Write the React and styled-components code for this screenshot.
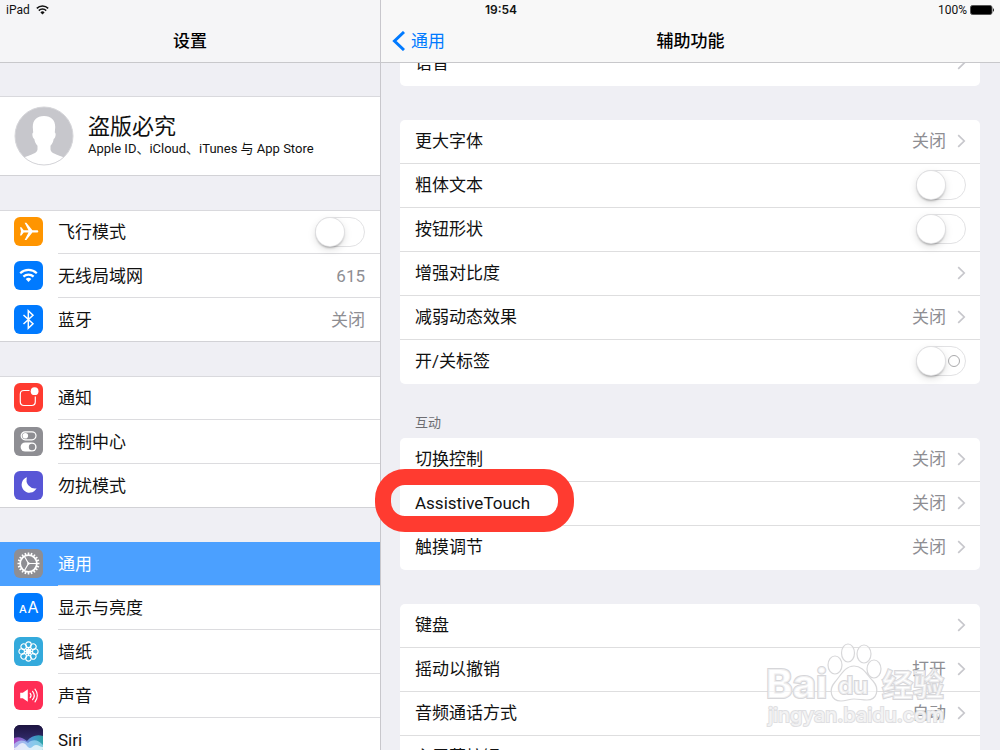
import React from "react";
import styled, { createGlobalStyle } from "styled-components";

const Global = createGlobalStyle`
  * { box-sizing: border-box; }
  html, body, #root { height: 100%; }
  body {
    margin: 0;
    background: #efeff4;
    color: #111;
    font-family: Roboto, "Noto Sans CJK SC", sans-serif;
    font-size: 17px;
    line-height: 24px;
    overflow: hidden;
  }
  button, input { font: inherit; color: inherit; margin: 0; }
  h1, h2, p, ul { margin: 0; padding: 0; }
  ul { list-style: none; }
`;

const Screen = styled.div`
  position: relative;
  display: flex;
  height: 100vh;
  overflow: hidden;
`;
const Sidebar = styled.nav`
  flex: 0 0 38%;
  display: flex;
  flex-direction: column;
  min-width: 0;
`;
const Detail = styled.main`
  flex: 1;
  display: flex;
  flex-direction: column;
  min-width: 0;
  border-left: 1px solid #c8c7cc;
`;
const Header = styled.header`
  flex: none;
  position: relative;
  z-index: 2;
  height: 63px;
  display: flex;
  flex-direction: column;
  background: ${(p) => (p.$light ? "#f8f8f8" : "#f5f5f7")};
  border-bottom: 1px solid #c8c8cb;
`;
const StatusBar = styled.div`
  height: 20px;
  display: flex;
  align-items: center;
  gap: 6px;
  padding: 0 6px;
  font-size: 12px;
  line-height: 20px;
`;
const StatusSide = styled.span`
  flex: 1;
  display: flex;
  justify-content: flex-end;
  align-items: center;
  gap: 3px;
`;
const Clock = styled.time`
  font-family: Inter, sans-serif;
  font-weight: 600;
  padding-left: 98px;
`;
const TitleBar = styled.div`
  flex: 1;
  display: grid;
  grid-template-columns: 1fr auto 1fr;
  align-items: center;
`;
const Title = styled.h1`
  grid-column: 2;
  font-size: 17px;
  line-height: 24px;
  font-weight: 500;
  color: #000;
`;
const Back = styled.button`
  justify-self: start;
  display: flex;
  align-items: center;
  gap: 6px;
  padding: 0 0 0 11px;
  border: 0;
  background: none;
  color: #007aff;
`;
const SideBody = styled.div`
  flex: 1;
  min-height: 0;
  overflow: hidden;
  display: flex;
  flex-direction: column;
  gap: 34px;
  padding-top: 33px;
`;
const Group = styled.ul`
  flex: none;
  background: #fff;
  box-shadow: inset 0 1px #d9d9dd, inset 0 -1px #d2d2d6;
`;
const SideItem = styled.li`
  height: 44px;
  display: flex;
  padding-left: 14px;
  background: ${(p) => (p.$on ? "#4ba0ff" : "transparent")};
  color: ${(p) => (p.$on ? "#fff" : "inherit")};
`;
const Badge = styled.span`
  flex: none;
  display: flex;
  width: 29px;
  height: 29px;
  margin: 7px 15px 0 0;
  border-radius: 6px;
  overflow: hidden;
  background: ${(p) => p.$bg};
  svg { width: 29px; height: 29px; }
`;
const SideMain = styled.div`
  flex: 1;
  display: flex;
  align-items: center;
  justify-content: space-between;
  padding-right: 15px;
  border-bottom: 1px solid ${(p) => (p.$last ? "transparent" : "#dcdcdf")};
`;
const Value = styled.span`
  color: #8e8e93;
`;
const Profile = styled.a`
  flex: none;
  display: flex;
  align-items: center;
  gap: 14px;
  height: 80px;
  padding-left: 14px;
  background: #fff;
  box-shadow: inset 0 1px #d9d9dd, inset 0 -1px #d2d2d6;
  color: inherit;
  text-decoration: none;
`;
const Name = styled.h2`
  font-size: 22px;
  line-height: 26px;
  font-weight: 400;
`;
const Sub = styled.p`
  font-size: 13px;
  line-height: 18px;
`;
const DetailBody = styled.div`
  flex: 1;
  min-height: 0;
  overflow-x: visible;
  overflow-y: clip;
  padding: 0 20px 0 19px;
`;
const Scrolled = styled.div`
  display: flex;
  flex-direction: column;
  gap: 34px;
  margin-top: -21px;
`;
const Card = styled.ul`
  background: #fff;
  border-radius: 5px;
  li + li { box-shadow: 0 -1px #dededf; }
`;
const Caption = styled.h2`
  font-size: 13px;
  line-height: 20px;
  font-weight: 400;
  color: #6d6d72;
  padding: 0 0 5px 15px;
  margin-top: -5px;
`;
const Row = styled.li`
  height: 44px;
  display: flex;
  padding-left: 15px;
`;
const RowMain = styled.div`
  flex: 1;
  display: flex;
  align-items: center;
  padding: 0 14px 2px 0;
  gap: 11px;
`;
const RowLabel = styled.label`
  flex: 1;
`;
const Switch = styled.input`
  appearance: none;
  flex: none;
  width: 50px;
  height: 30px;
  border-radius: 15px;
  border: 1px solid #e2e2e4;
  background: #fff;
  display: flex;
  align-items: center;
  justify-content: space-between;
  &::before {
    content: "";
    width: 28px;
    height: 28px;
    border-radius: 50%;
    background: #fff;
    box-shadow: 0 0 0 1px #e0e0e2, 0 2px 2px #00000040, 0 3px 8px #00000026;
  }
  &::after {
    content: "";
    display: ${(p) => (p.$mark ? "block" : "none")};
    width: 10px;
    height: 10px;
    margin-right: 5px;
    border: 1px solid #a9a9ab;
    border-radius: 50%;
  }
`;
const Highlight = styled.div`
  position: absolute;
  left: -25px;
  top: -13px;
  width: 199px;
  height: 63px;
  border: 16px solid #ff3b30;
  border-radius: 30px;
  pointer-events: none;
`;
const MarkedRow = styled(Row)`
  position: relative;
  z-index: 1;
`;
const Watermark = styled.svg`
  position: absolute;
  right: 50px;
  bottom: 10px;
  width: 190px;
  height: 100px;
  pointer-events: none;
`;

const Chevron = () => (
  <svg width="9" height="14" viewBox="0 0 9 14" fill="none" stroke="#c7c7cc" strokeWidth="1.700">
    <path d="M1.200 1.200 7.200 7l-6 5.800" />
  </svg>
);
const Wifi = () => (
  <svg width="13" height="10" viewBox="0 0 13 10" fill="none" stroke="#111" strokeWidth="1.500">
    <path d="M.8 3.400a8.200 8.200 0 0 1 11.400 0M2.800 5.600a5.300 5.300 0 0 1 7.400 0" />
    <path d="M6.500 9.600 4.400 7.400a3 3 0 0 1 4.200 0z" fill="#111" stroke="none" />
  </svg>
);
const Battery = () => (
  <svg width="24" height="10" viewBox="0 0 24 10">
    <rect x=".5" y=".5" width="21.500" height="9" rx="2" fill="#000" stroke="#555" />
    <path d="M23 3.300c1.300.4 1.300 3 0 3.400z" fill="#222" />
  </svg>
);
const Avatar = () => (
  <svg width="60" height="60" viewBox="0 0 60 60">
    <defs>
      <clipPath id="face"><circle cx="30" cy="30" r="29" /></clipPath>
    </defs>
    <circle cx="30" cy="30" r="29" fill="#c7c7cc" />
    <path
      clipPath="url(#face)"
      fill="#fff"
      d="M30 10c7.500 0 11.500 4.500 11.200 11.500l-.4 5c1.500.3.9 5.600-1.100 6.500-.5 3-1.400 4.800-3.200 6.800v3.700c.3 4 6 4.800 15 8.500v10h-43V52c9-3.700 14.700-4.500 15-8.500v-3.700c-1.800-2-2.700-3.800-3.200-6.800-2-.9-2.600-6.200-1.100-6.500l-.4-5C18.500 14.500 22.500 10 30 10z"
    />
    <circle cx="30" cy="30" r="29" fill="none" stroke="#d5d5d9" />
  </svg>
);

const petals = [0, 45, 90, 135, 180, 225, 270, 315];
const teeth = Array.from({ length: 20 }, (_, i) => i * 18);

const icons = {
  plane: (
    <path fill="#fff" d="M6 10.200h1.400l2.300 3h4.800L10.600 5.700h1.800l6 7.500h4.300c2.200 0 2.200 2.300 0 2.300h-4.300l-6 7.500h-1.800l3.900-7.500H9.700l-2.300 3H6l1-4.150z" />
  ),
  wifi: (
    <g fill="none" stroke="#fff" strokeWidth="2.200">
      <path d="M6.200 12.200a12 12 0 0 1 16.600 0M9.400 15.600a7.400 7.400 0 0 1 10.200 0" />
      <path d="m14.500 21-2.800-2.900a4 4 0 0 1 5.600 0z" fill="#fff" stroke="none" />
    </g>
  ),
  bluetooth: (
    <path fill="none" stroke="#fff" strokeWidth="1.500" d="m9.500 10 9.500 8.800-4.700 4.500V5.700l4.700 4.500L9.500 19" />
  ),
  notice: (
    <g>
      <path fill="none" stroke="#fff" strokeWidth="1.200" d="M15.500 7.500H10c-2.800 0-3.700 1-3.700 3.700v7.600c0 2.700.9 3.700 3.700 3.700h7.600c2.800 0 3.700-1 3.700-3.700v-5.300" />
      <circle cx="20.600" cy="8.200" r="3.900" fill="#fff" />
    </g>
  ),
  control: (
    <g>
      <rect x="7.200" y="4.800" width="14.800" height="8" rx="4" fill="none" stroke="#fff" strokeWidth="1.200" />
      <circle cx="11.300" cy="8.800" r="2.800" fill="#fff" />
      <rect x="6.600" y="15.400" width="16" height="9.200" rx="4.600" fill="#fff" />
      <circle cx="18" cy="20" r="3.200" fill="#8e8e93" />
    </g>
  ),
  moon: (
    <path fill="#fff" d="M13 6.300a7.900 7.900 0 1 0 9.600 11A8.400 8.400 0 0 1 13 6.300z" />
  ),
  gear: (
    <g fill="none" stroke="#fff">
      <circle cx="14.500" cy="14.500" r="8.300" strokeWidth="1.700" />
      {teeth.map((a) => (
        <path key={a} strokeWidth="1.600" d="M14.500 3.500v2.700" transform={`rotate(${a} 14.500 14.500)`} />
      ))}
      <path strokeWidth="1.200" d="M14.500 14.500h8M14.500 14.500l-4-7M14.500 14.500l-4 7" />
      <circle cx="14.500" cy="14.500" r="1.200" fill="#fff" stroke="none" />
    </g>
  ),
  text: (
    <g fill="#fff" fontFamily="Inter, sans-serif" textAnchor="middle">
      <text x="9" y="20" fontSize="11" fontWeight="500">A</text>
      <text x="19" y="20" fontSize="16">A</text>
    </g>
  ),
  flower: (
    <g fill="none" stroke="#fff" strokeWidth="1.100">
      {petals.map((a) => (
        <g key={a} transform={`rotate(${a} 14.500 14.500)`}>
          <circle cx="14.500" cy="7.700" r="2.800" />
          <path d="M14.500 14.500v-4" />
        </g>
      ))}
      <circle cx="14.500" cy="14.500" r="2.400" />
    </g>
  ),
  sound: (
    <g>
      <path fill="#fff" d="M6.200 11.700h2.600l5-3.500v12.600l-5-3.500H6.200z" />
      <path fill="none" stroke="#fff" strokeWidth="1.200" strokeLinecap="round" d="M16.200 12.300c1 1.300 1 3.100 0 4.400M18.600 10.300c2 2.500 2 5.900 0 8.400M21 8.200c3 3.800 3 8.800 0 12.600" />
    </g>
  ),
  siri: (
    <g>
      <defs>
        <linearGradient id="night" x1="0" y1="0" x2="0" y2="1">
          <stop offset="0" stopColor="#1d1440" />
          <stop offset="0.400" stopColor="#2c2560" />
          <stop offset="1" stopColor="#2f6fa8" />
        </linearGradient>
        <linearGradient id="wave" x1="0" y1="0" x2="1" y2="0">
          <stop offset="0" stopColor="#c94fe0" />
          <stop offset="0.350" stopColor="#9a8cf5" />
          <stop offset="0.650" stopColor="#4cb8ee" />
          <stop offset="1" stopColor="#2fc6b8" />
        </linearGradient>
      </defs>
      <rect width="29" height="29" fill="url(#night)" />
      <path d="M0 13c5-2 9 0 13 3 4-5 10-7 16-5v18H0z" fill="url(#wave)" opacity=".75" />
      <path d="M0 19c4-4 9-5 14-1 4-4 10-4 15 2v9H0z" fill="#b5e6ff" opacity=".6" />
      <path d="M0 23c3 0 5-5 8.500-5s5 5 7.500 5 3-3 6-3 4 2 7 2v7H0z" fill="#fff" opacity=".7" />
    </g>
  ),
};

const sideGroups = [
  [
    { icon: "plane", bg: "#ff9500", label: "飞行模式", toggle: true },
    { icon: "wifi", bg: "#007aff", label: "无线局域网", value: "615" },
    { icon: "bluetooth", bg: "#007aff", label: "蓝牙", value: "关闭" },
  ],
  [
    { icon: "notice", bg: "#ff3b30", label: "通知" },
    { icon: "control", bg: "#8e8e93", label: "控制中心" },
    { icon: "moon", bg: "#5856d6", label: "勿扰模式" },
  ],
  [
    { icon: "gear", bg: "#8e8e93", label: "通用", on: true },
    { icon: "text", bg: "#007aff", label: "显示与亮度" },
    { icon: "flower", bg: "#34aadc", label: "墙纸" },
    { icon: "sound", bg: "#ff2d55", label: "声音" },
    { icon: "siri", bg: "#1f1440", label: "Siri" },
  ],
];

const cards = [
  { rows: [{ label: "语音" }] },
  {
    rows: [
      { label: "更大字体", value: "关闭" },
      { label: "粗体文本", toggle: true },
      { label: "按钮形状", toggle: true },
      { label: "增强对比度" },
      { label: "减弱动态效果", value: "关闭" },
      { label: "开/关标签", toggle: true, mark: true },
    ],
  },
  {
    caption: "互动",
    rows: [
      { label: "切换控制", value: "关闭" },
      { label: "AssistiveTouch", value: "关闭", marked: true },
      { label: "触摸调节", value: "关闭" },
    ],
  },
  {
    rows: [
      { label: "键盘" },
      { label: "摇动以撤销", value: "打开" },
      { label: "音频通话方式", value: "自动" },
      { label: "主屏幕按钮" },
    ],
  },
];

function DetailRow({ label, value, toggle, mark, marked }) {
  const Wrap = marked ? MarkedRow : Row;
  return (
    <Wrap>
      <RowMain>
        <RowLabel htmlFor={toggle ? label : undefined}>{label}</RowLabel>
        {value && <Value>{value}</Value>}
        {toggle ? <Switch type="checkbox" role="switch" id={label} $mark={mark} /> : <Chevron />}
      </RowMain>
      {marked && <Highlight />}
    </Wrap>
  );
}

export default function App() {
  return (
    <Screen>
      <Global />
      <Sidebar>
        <Header>
          <StatusBar>iPad <Wifi /></StatusBar>
          <TitleBar><Title>设置</Title></TitleBar>
        </Header>
        <SideBody>
          <Profile href="#account">
            <Avatar />
            <div>
              <Name>盗版必究</Name>
              <Sub>Apple ID、iCloud、iTunes 与 App Store</Sub>
            </div>
          </Profile>
          {sideGroups.map((group) => (
            <Group key={group[0].label}>
              {group.map((item, i) => (
                <SideItem key={item.label} $on={item.on}>
                  <Badge $bg={item.bg}>
                    <svg viewBox="0 0 29 29">{icons[item.icon]}</svg>
                  </Badge>
                  <SideMain $last={i === group.length - 1}>
                    <label htmlFor={item.toggle ? item.label : undefined}>{item.label}</label>
                    {item.value && <Value>{item.value}</Value>}
                    {item.toggle && <Switch type="checkbox" role="switch" id={item.label} />}
                  </SideMain>
                </SideItem>
              ))}
            </Group>
          ))}
        </SideBody>
      </Sidebar>
      <Detail>
        <Header $light>
          <StatusBar>
            <Clock>19:54</Clock>
            <StatusSide>100% <Battery /></StatusSide>
          </StatusBar>
          <TitleBar>
            <Back>
              <svg width="13" height="20" viewBox="0 0 13 20" fill="none" stroke="#007aff" strokeWidth="3">
                <path d="m12 1-9.500 9L12 19" />
              </svg>
              通用
            </Back>
            <Title>辅助功能</Title>
          </TitleBar>
        </Header>
        <DetailBody>
          <Scrolled>
            {cards.map((card) => (
              <section key={card.rows[0].label}>
                {card.caption && <Caption>{card.caption}</Caption>}
                <Card>
                  {card.rows.map((row) => <DetailRow key={row.label} {...row} />)}
                </Card>
              </section>
            ))}
          </Scrolled>
        </DetailBody>
      </Detail>
      <Watermark viewBox="0 0 190 100">
        <g fill="#fff" fillOpacity=".6" stroke="#d8d8da" strokeWidth="1.200">
          <ellipse cx="75" cy="25" rx="7" ry="9" />
          <ellipse cx="88" cy="13" rx="6.500" ry="9" />
          <ellipse cx="104" cy="14" rx="7" ry="9" />
          <ellipse cx="114" cy="29" rx="7" ry="9" />
          <path d="M94 26c9 0 13 9 19 15 7 8 4 19-6 19-5 0-8-1-13-1s-8 2-13 2c-10 0-13-11-6-19 6-7 10-16 19-16z" />
        </g>
        <g fill="#fff" fillOpacity=".6" stroke="#d6d6d9" fontFamily='Inter, "Noto Sans CJK SC", sans-serif' paintOrder="stroke" strokeWidth="2" fontWeight="800">
          <text x="6" y="58" fontSize="40">Bai</text>
          <text x="78" y="54" fontSize="24" fontWeight="700">du</text>
          <text x="122" y="56" fontSize="31" fontWeight="700">经验</text>
          <text x="8" y="82" fontSize="20" fontWeight="500" stroke="#dfdfe2">jingyan.baidu.com</text>
        </g>
      </Watermark>
    </Screen>
  );
}
